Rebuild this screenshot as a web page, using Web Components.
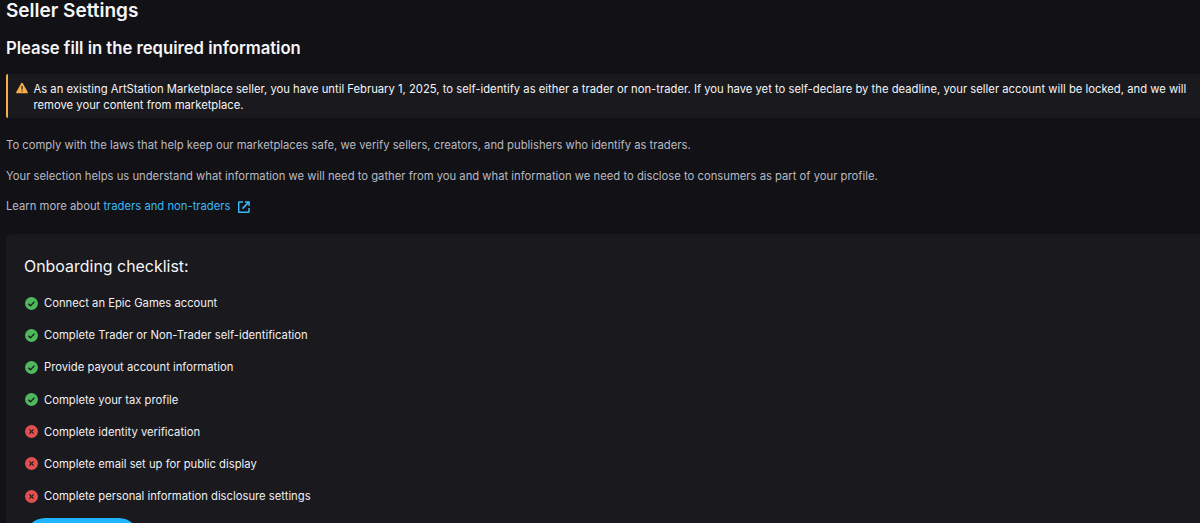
<!DOCTYPE html>
<html>
<head>
<meta charset="utf-8">
<title>Seller Settings</title>
<style>
  html, body { margin: 0; height: 523px; overflow: hidden; background: #111116; }
  body { font-family: Inter, "Liberation Sans", sans-serif; color: #f5f5f7; }
</style>
</head>
<body>
<seller-page></seller-page>

<script>
const CHECK = `<svg width="13" height="13" viewBox="0 0 13 13"><circle cx="6.5" cy="6.5" r="6.5" fill="#4fb85c"/><path d="M3.4 6.8l2.1 2 4-4.2" fill="none" stroke="#1a1a20" stroke-width="1.3"/></svg>`;
const CROSS = `<svg width="13" height="13" viewBox="0 0 13 13"><circle cx="6.5" cy="6.5" r="6.5" fill="#e0504f"/><path d="M4.4 4.4l4.2 4.2M8.6 4.4l-4.2 4.2" fill="none" stroke="#1a1a20" stroke-width="1.1"/></svg>`;

class SellerAlert extends HTMLElement {
    constructor() {
        super();
        this.attachShadow({ mode: "open" });
        this.shadowRoot.innerHTML = `
        <style>
            :host {
                display: flex;
                gap: 6px;
                background: #19191e;
                border-left: 2.5px solid #f5ae4b;
                border-radius: 2px;
                padding: 7px 8px 5px 7.5px;
                font-size: 11.25px;
                line-height: 16px;
                color: #f5f5f7;
            }
            svg { flex: none; margin-top: 1px; }
        </style>
        <svg width="12" height="12" viewBox="0 0 12 12"><path d="M6 .8c.3 0 .6.2.8.5l4.9 8.6c.3.6-.1 1.3-.8 1.3H1.1c-.7 0-1.1-.7-.8-1.3l4.9-8.6c.2-.3.5-.5.8-.5z" fill="#f5ae4b"/><path d="M5.4 4h1.2v3.6H5.4zM5.4 8.4h1.2v1.2H5.4z" fill="#19191e"/></svg>
        <div><slot></slot></div>
        `;
    }
}
customElements.define("seller-alert", SellerAlert);

class CheckItem extends HTMLElement {
    constructor() {
        super();
        this.attachShadow({ mode: "open" });
    }

    connectedCallback() {
        const done = this.hasAttribute("done");
        this.shadowRoot.innerHTML = `
        <style>
            :host {
                display: flex;
                align-items: center;
                gap: 6px;
                height: 32.15px;
                padding-left: 1px;
                font-size: 11.25px;
                color: #f0f0f3;
            }
            svg { flex: none; }
        </style>
        ${done ? CHECK : CROSS}
        <span><slot></slot></span>
        `;
    }
}
customElements.define("check-item", CheckItem);

class ChecklistCard extends HTMLElement {
    constructor() {
        super();
        this.attachShadow({ mode: "open" });
        this.shadowRoot.innerHTML = `
        <style>
            :host {
                display: block;
                background: #19191e;
                border-radius: 6px 0 0 6px;
                padding: 23px 18px 0 18px;
            }
            h3 {
                margin: 0 0 10.4px;
                font-size: 15.94px;
                line-height: 20px;
                font-weight: 400;
                color: #f5f5f7;
            }
            .btn {
                width: 114px;
                height: 40px;
                margin: 5.6px 0 0 1px;
                border-radius: 20px;
                background: #1fb6ff;
            }
        </style>
        <h3>Onboarding checklist:</h3>
        <slot></slot>
        <div class="btn"></div>
        `;
    }
}
customElements.define("checklist-card", ChecklistCard);

class SellerPage extends HTMLElement {
    constructor() {
        super();
        this.attachShadow({ mode: "open" });
        this.shadowRoot.innerHTML = `
        <style>
            :host {
                display: block;
                padding-left: 6px;
            }
            h1 {
                margin: 0;
                padding-top: 1px;
                font-size: 19px;
                line-height: 20px;
                font-weight: 600;
            }
            h2 {
                margin: 17px 0 0;
                font-size: 16.65px;
                line-height: 20px;
                font-weight: 600;
            }
            seller-alert { margin: 16px 0 20.75px; }
            p {
                margin: 17.75px 0 0;
                font-size: 11.25px;
                line-height: 13px;
                color: #babac2;
            }
            a { color: #3bb8f5; text-decoration: none; }
            a svg { vertical-align: -3px; margin-left: 4px; }
            checklist-card { margin-top: 20.5px; }
        </style>
        <h1>Seller Settings</h1>
        <h2>Please fill in the required information</h2>
        <seller-alert>As an existing ArtStation Marketplace seller, you have until February 1, 2025, to self-identify as either a trader or non-trader. If you have yet to self-declare by the deadline, your seller account will be locked, and we will remove your content from marketplace.</seller-alert>
        <p>To comply with the laws that help keep our marketplaces safe, we verify sellers, creators, and publishers who identify as traders.</p>
        <p>Your selection helps us understand what information we will need to gather from you and what information we need to disclose to consumers as part of your profile.</p>
        <p>Learn more about <a href="#">traders and non-traders <svg width="12" height="12" viewBox="0 0 12 12" fill="none" stroke="#3bb8f5" stroke-width="1.5"><path d="M5 1H1.2a.5.5 0 0 0-.5.5v9.3c0 .3.2.5.5.5h9.3c.3 0 .5-.2.5-.5V7"/><path d="M4.4 7.6L10.6 1.4M7 .9h4.1V5"/></svg></a></p>
        <checklist-card>
            <check-item done>Connect an Epic Games account</check-item>
            <check-item done>Complete Trader or Non-Trader self-identification</check-item>
            <check-item done>Provide payout account information</check-item>
            <check-item done>Complete your tax profile</check-item>
            <check-item>Complete identity verification</check-item>
            <check-item>Complete email set up for public display</check-item>
            <check-item>Complete personal information disclosure settings</check-item>
        </checklist-card>
        `;
    }
}
customElements.define("seller-page", SellerPage);
</script>
</body>
</html>
